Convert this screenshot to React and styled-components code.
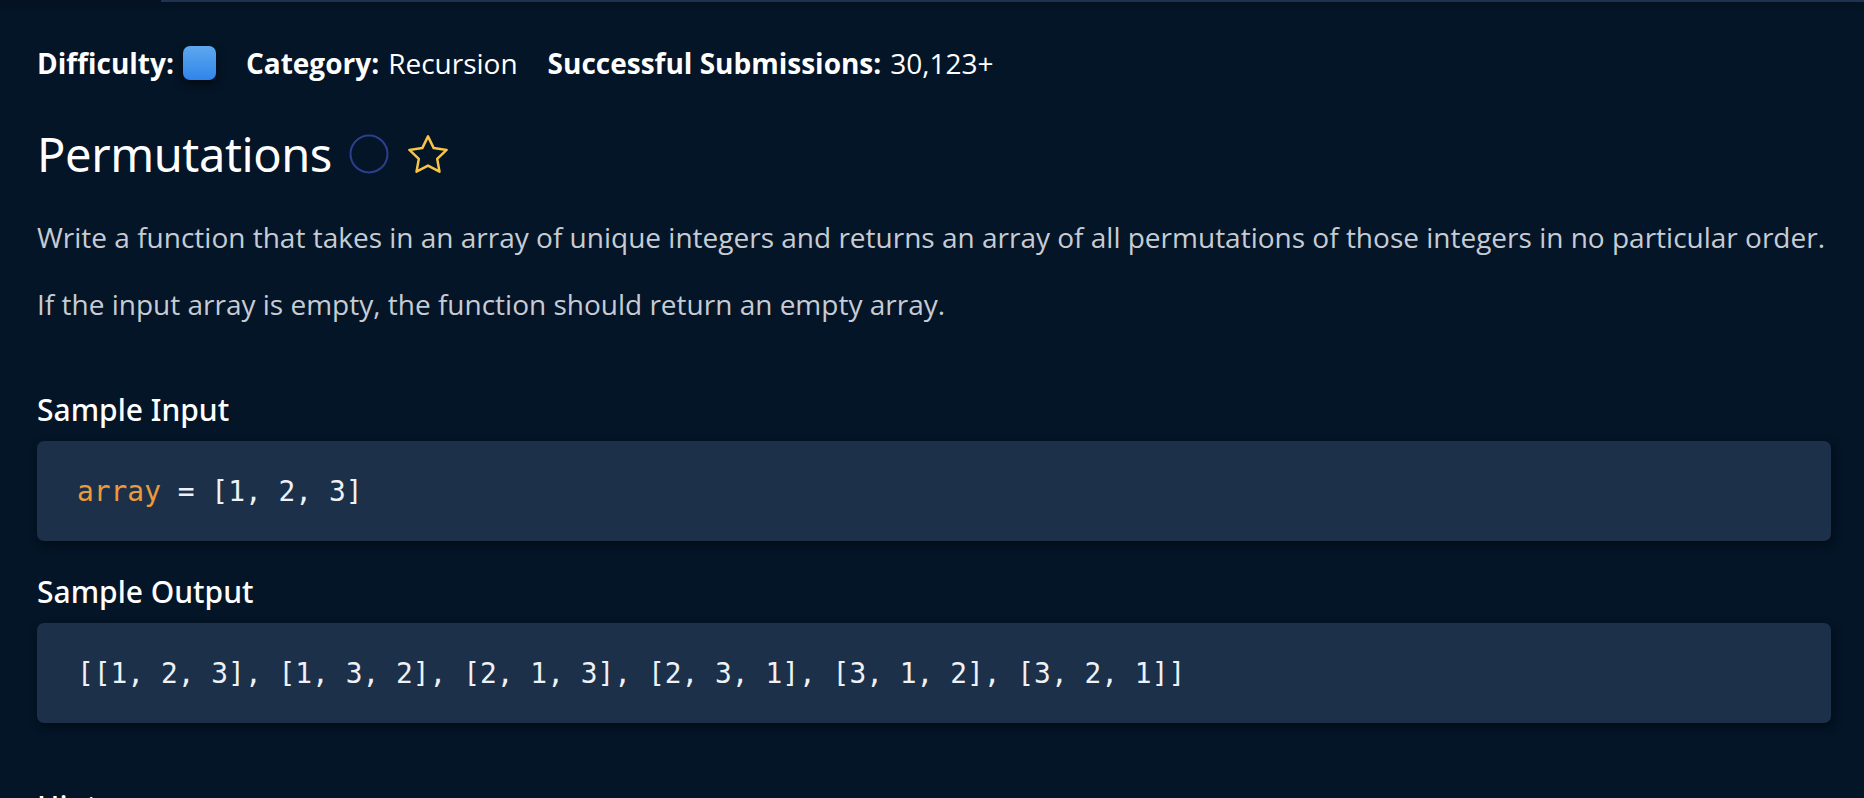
import React from 'react';
import styled, { createGlobalStyle } from 'styled-components';

const COLOR = {
  BG: '#041527',
  TOPBAR: '#1e3350',
  TOPBAR_DARK: '#07111f',
  TEXT: '#ffffff',
  MUTED: '#c7ccd4',
  CODE_BG: '#1c3049',
  KEYWORD: '#ec9a3c',
  CIRCLE: '#2c3f8c',
  STAR: '#f8c445',
};

const GlobalStyle = createGlobalStyle`
  html, body {
    margin: 0;
    padding: 0;
    background: ${COLOR.BG};
  }
  body {
    font-family: 'Open Sans', 'Noto Sans', sans-serif;
    color: ${COLOR.TEXT};
    overflow: hidden;
  }
`;

const Star = () => (
  <svg width="40" height="39" viewBox="2 2 20 19.5" fill="none">
    <path
      d="M12 2.7l2.85 5.85 6.45.9-4.7 4.5 1.15 6.4L12 17.3l-5.75 3.05 1.15-6.4-4.7-4.5 6.45-.9z"
      stroke={COLOR.STAR}
      strokeWidth="1.25"
      strokeLinejoin="round"
    />
  </svg>
);

const Circle = () => (
  <svg width="40" height="40" viewBox="0 0 40 40" fill="none">
    <circle cx="20" cy="20" r="18.5" stroke={COLOR.CIRCLE} strokeWidth="2" />
  </svg>
);

const MetaItem = ({ label, children }) => (
  <StyledMetaItem>
    <StyledMetaLabel>{label}</StyledMetaLabel>
    {children}
  </StyledMetaItem>
);

const CodeBlock = ({ children }) => (
  <StyledCodeBox>
    <StyledCode>{children}</StyledCode>
  </StyledCodeBox>
);

const App = () => (
  <>
    <GlobalStyle />
    <StyledTopBar>
      <StyledTopBarSegment $dark />
      <StyledTopBarSegment />
    </StyledTopBar>
    <StyledPage>
      <StyledMetaRow>
        <MetaItem label="Difficulty:">
          <StyledDifficultyBadge />
        </MetaItem>
        <MetaItem label="Category:">
          <StyledMetaValue>Recursion</StyledMetaValue>
        </MetaItem>
        <MetaItem label="Successful Submissions:">
          <StyledMetaValue>30,123+</StyledMetaValue>
        </MetaItem>
      </StyledMetaRow>

      <StyledTitleRow>
        <StyledTitle>Permutations</StyledTitle>
        <StyledIconButton>
          <Circle />
        </StyledIconButton>
        <StyledIconButton $offset="3px">
          <Star />
        </StyledIconButton>
      </StyledTitleRow>

      <StyledParagraph>
        Write a function that takes in an array of unique integers and returns an array of all
        permutations of those integers in no particular order.
      </StyledParagraph>
      <StyledParagraph>
        If the input array is empty, the function should return an empty array.
      </StyledParagraph>

      <StyledSection>
        <StyledSectionTitle>Sample Input</StyledSectionTitle>
        <CodeBlock>
          <StyledKeyword>array</StyledKeyword> = [1, 2, 3]
        </CodeBlock>
      </StyledSection>

      <StyledSection>
        <StyledSectionTitle>Sample Output</StyledSectionTitle>
        <CodeBlock>[[1, 2, 3], [1, 3, 2], [2, 1, 3], [2, 3, 1], [3, 1, 2], [3, 2, 1]]</CodeBlock>
      </StyledSection>

      <StyledSection $gap="64px">
        <StyledSectionTitle>Hints</StyledSectionTitle>
      </StyledSection>
    </StyledPage>
  </>
);

const StyledTopBar = styled.div`
  display: flex;
  height: 2px;
  box-shadow: 0 3px 6px rgba(0, 0, 0, 0.35);
`;

const StyledTopBarSegment = styled.div`
  flex: ${({ $dark }) => ($dark ? '0 0 161px' : '1')};
  background: ${({ $dark }) => ($dark ? COLOR.TOPBAR_DARK : COLOR.TOPBAR)};
`;

const StyledPage = styled.main`
  padding: 44px 33px 0 37px;
`;

const StyledMetaRow = styled.header`
  display: flex;
  align-items: center;
  gap: 30px;
  height: 34px;
  font-size: 28px;
`;

const StyledMetaItem = styled.div`
  display: flex;
  align-items: center;
  gap: 9px;
  white-space: nowrap;
`;

const StyledMetaLabel = styled.span`
  font-weight: 700;
`;

const StyledMetaValue = styled.span`
  font-weight: 400;
`;

const StyledDifficultyBadge = styled.span`
  width: 33px;
  height: 34px;
  border-radius: 7px;
  background: linear-gradient(180deg, #5ea8ef 0%, #2f85ea 100%);
  box-shadow: 0 4px 8px rgba(0, 0, 0, 0.55);
`;

const StyledTitleRow = styled.div`
  display: flex;
  align-items: center;
  gap: 16px;
  margin-top: 44px;
`;

const StyledTitle = styled.h1`
  margin: 0 1px 0 0;
  font-family: 'Noto Sans', 'Open Sans', sans-serif;
  font-size: 47px;
  font-weight: 400;
  line-height: 60px;
  letter-spacing: -0.4px;
`;

const StyledIconButton = styled.span`
  display: flex;
  align-items: center;
  width: 40px;
  height: 40px;
  margin-left: ${({ $offset }) => $offset || '0'};
`;

const StyledParagraph = styled.p`
  margin: 35px 0 0;
  color: ${COLOR.MUTED};
  font-size: 28px;
  line-height: 36px;
  white-space: nowrap;

  & + & {
    margin-top: 31px;
  }
`;

const StyledSection = styled.section`
  margin-top: ${({ $gap }) => $gap || '31px'};

  &:first-of-type {
    margin-top: 68px;
  }
`;

const StyledSectionTitle = styled.h2`
  margin: 0 0 11px;
  font-family: 'Noto Sans', 'Open Sans', sans-serif;
  font-size: 30px;
  font-weight: 500;
  line-height: 40px;
`;

const StyledCodeBox = styled.div`
  display: flex;
  align-items: center;
  height: 100px;
  padding: 0 40px;
  border-radius: 7px;
  background: ${COLOR.CODE_BG};
  box-shadow: 2px 4px 10px rgba(0, 0, 0, 0.45);
`;

const StyledCode = styled.pre`
  margin: 0;
  font-family: 'DejaVu Sans Mono', 'Liberation Mono', monospace;
  font-size: 27.9px;
  color: #eef1f5;
`;

const StyledKeyword = styled.span`
  color: ${COLOR.KEYWORD};
`;

export default App;
